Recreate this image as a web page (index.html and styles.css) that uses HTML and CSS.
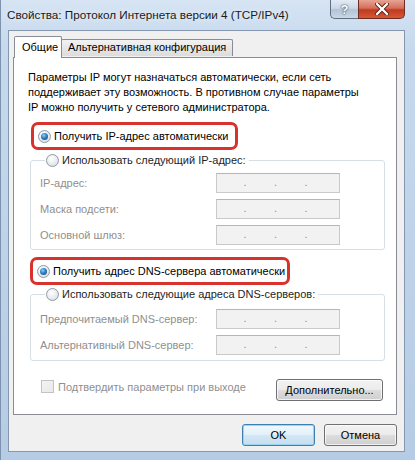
FILE: index.html
```html
<!DOCTYPE html>
<html lang="ru">
<head>
    <meta charset="UTF-8">
    <title>Свойства: Протокол Интернета версии 4 (TCP/IPv4)</title>
    <link rel="stylesheet" href="styles.css">
</head>
<body>
    <div class="window">
        <div class="titlebar">
            <span class="title">Свойства: Протокол Интернета версии 4 (TCP/IPv4)</span>
            <div class="caption-buttons">
                <span class="cap help">?</span>
                <span class="cap close">
                    <svg width="14" height="12" viewBox="0 0 14 12">
                        <path d="M2 1 L12 11 M12 1 L2 11" stroke="#5a1a12" stroke-width="4" stroke-linecap="round"/>
                        <path d="M2 1 L12 11 M12 1 L2 11" stroke="#ffffff" stroke-width="2.4" stroke-linecap="round"/>
                    </svg>
                </span>
            </div>
        </div>

        <div class="client">
            <div class="tabs">
                <span class="tab active">Общие</span>
                <span class="tab">Альтернативная конфигурация</span>
            </div>

            <div class="panel">
                <p class="intro">
                    Параметры IP могут назначаться автоматически, если сеть<br>
                    поддерживает эту возможность. В противном случае параметры<br>
                    IP можно получить у сетевого администратора.
                </p>

                <div class="highlight hl-ip">
                    <label class="option"><span class="radio checked"></span>Получить IP-адрес автоматически</label>
                </div>

                <fieldset class="group">
                    <legend><label class="option"><span class="radio"></span>Использовать следующий IP-адрес:</label></legend>
                    <div class="row"><span class="lbl">IP-адрес:</span><span class="ipbox"><i>.</i><i>.</i><i>.</i><i></i></span></div>
                    <div class="row"><span class="lbl">Маска подсети:</span><span class="ipbox"><i>.</i><i>.</i><i>.</i><i></i></span></div>
                    <div class="row"><span class="lbl">Основной шлюз:</span><span class="ipbox"><i>.</i><i>.</i><i>.</i><i></i></span></div>
                </fieldset>

                <div class="highlight hl-dns">
                    <label class="option"><span class="radio checked"></span>Получить адрес DNS-сервера автоматически</label>
                </div>

                <fieldset class="group group-dns">
                    <legend><label class="option"><span class="radio"></span>Использовать следующие адреса DNS-серверов:</label></legend>
                    <div class="row"><span class="lbl">Предпочитаемый DNS-сервер:</span><span class="ipbox"><i>.</i><i>.</i><i>.</i><i></i></span></div>
                    <div class="row"><span class="lbl">Альтернативный DNS-сервер:</span><span class="ipbox"><i>.</i><i>.</i><i>.</i><i></i></span></div>
                </fieldset>

                <div class="panel-foot">
                    <label class="check-option"><span class="checkbox"></span>Подтвердить параметры при выходе</label>
                    <button class="btn btn-more">Дополнительно...</button>
                </div>
            </div>

            <div class="dialog-buttons">
                <button class="btn btn-default">OK</button>
                <button class="btn">Отмена</button>
            </div>
        </div>
    </div>
</body>
</html>
```

FILE: styles.css
```css
* {
    margin: 0;
    padding: 0;
    box-sizing: border-box;
}

body {
    font-family: 'Liberation Sans', Arial, sans-serif;
    font-size: 11px;
    color: #000;
    background: #9fb6cf;
    white-space: nowrap;
}

.window {
    width: 415px;
    height: 460px;
    display: flex;
    flex-direction: column;
    background: linear-gradient(180deg, #d6e4f3 0%, #c6d9ee 10%, #bdd2e9 60%, #b6cce4 100%);
    border-left: 1px solid #7d93ad;
}

.titlebar {
    height: 30px;
    display: flex;
    justify-content: space-between;
    padding-left: 6px;
}

.title {
    font-size: 11.7px;
    line-height: 30px;
    color: #1a1a1a;
    text-shadow: 0 0 6px rgba(255,255,255,0.9);
}

.caption-buttons {
    display: flex;
    margin-right: 10px;
    height: 19px;
}

.cap {
    display: flex;
    align-items: center;
    justify-content: center;
    height: 19px;
    border: 1px solid #5f6e80;
    border-top: none;
}

.help {
    width: 28px;
    border-right: none;
    border-bottom-left-radius: 5px;
    background: linear-gradient(180deg, #e3ebf4 0%, #cbd8e6 45%, #b3c4d6 55%, #c8d8e8 100%);
    color: #fff;
    font-weight: bold;
    font-size: 13px;
    text-shadow: 0 0 2px #33475e, 0 0 1px #33475e;
}

.close {
    width: 47px;
    border-bottom-right-radius: 5px;
    border-color: #6d2b22;
    background: linear-gradient(180deg, #e8a493 0%, #d46f5a 45%, #c2391f 55%, #d25a34 100%);
}

.client {
    flex: 1;
    margin: 0 10px 8px 7px;
    background: #f0f0f0;
    border: 1px solid #8497ae;
    padding: 6px 7px 0 4px;
    display: flex;
    flex-direction: column;
}

/* tabs */

.tabs {
    display: flex;
    align-items: flex-end;
    height: 20px;
    padding-left: 1px;
    position: relative;
    z-index: 2;
}

.tab {
    height: 17px;
    line-height: 15px;
    padding: 0 6px;
    border: 1px solid #898c95;
    border-bottom: none;
    background: linear-gradient(180deg, #f2f2f2, #dcdcdc);
    border-radius: 2px 2px 0 0;
    margin-bottom: 1px;
    margin-left: -1px;
}

.tab.active {
    height: 22px;
    line-height: 21px;
    width: 48px;
    padding: 0 7px;
    background: #fff;
    margin-bottom: -1px;
    margin-left: 0;
    z-index: 3;
}

.panel {
    height: 358px;
    background: #fff;
    border: 1px solid #898c95;
    padding: 12px 13px 0 14px;
}

.intro {
    line-height: 15px;
}

/* red highlight frames */

.highlight {
    border: 3px solid #d8322c;
    border-radius: 7px;
    height: 28px;
    display: flex;
    align-items: center;
    padding-left: 4px;
    margin-top: 7px;
}

.hl-ip {
    width: 207px;
    margin-left: 3px;
}

.hl-dns {
    width: 260px;
    margin-left: 2px;
}

.option {
    display: flex;
    align-items: center;
    gap: 3px;
    line-height: 15px;
}

.radio {
    width: 13px;
    height: 13px;
    border-radius: 50%;
    border: 1px solid #8e9aa6;
    background: radial-gradient(circle at 40% 35%, #ffffff 0%, #e6e9ec 60%, #cdd3d9 100%);
    position: relative;
}

.radio.checked::after {
    content: "";
    position: absolute;
    left: 2px;
    top: 2px;
    width: 7px;
    height: 7px;
    border-radius: 50%;
    background: radial-gradient(circle at 40% 35%, #8fd0f5 0%, #2f7fc4 45%, #173f78 100%);
}

/* group boxes */

.group {
    border: 1px solid #d5dfe5;
    border-radius: 3px;
    width: 355px;
    margin: 3px 0 0 2px;
    padding: 5px 0 4px 9px;
}

.group legend {
    margin-left: 5px;
    padding: 0 3px 0 1px;
}

.group .option {
    color: #1e1e1e;
}

.row {
    display: flex;
    align-items: center;
    height: 20px;
    margin-bottom: 6px;
}

.row:last-child {
    margin-bottom: 0;
}

.lbl {
    width: 176px;
    color: #8f8f8f;
}

.ipbox {
    width: 124px;
    height: 20px;
    border: 1px solid #c9c9c9;
    border-top-color: #b5b5b5;
    background: #f2f2f2;
    display: grid;
    grid-template-columns: repeat(4, 1fr);
}

.ipbox i {
    font-style: normal;
    text-align: right;
    color: #8f8f8f;
    line-height: 17px;
    padding-right: 1px;
}

.hl-dns {
    margin-top: 7px;
}

.group-dns {
    margin-top: 2px;
    padding: 7px 0 5px 9px;
}

/* footer of the tab page */

.panel-foot {
    display: flex;
    justify-content: space-between;
    align-items: flex-start;
    margin-top: 18px;
}

.check-option {
    display: flex;
    align-items: center;
    gap: 4px;
    color: #8f8f8f;
    margin-left: 13px;
    height: 13px;
    margin-top: 1px;
}

.checkbox {
    width: 13px;
    height: 13px;
    border: 1px solid #c3c3c3;
    background: linear-gradient(135deg, #f3f3f3, #e8e8e8);
}

.btn {
    font-family: 'Liberation Sans', Arial, sans-serif;
    font-size: 11px;
    color: #000;
    height: 22px;
    border: 1px solid #707070;
    border-radius: 3px;
    background: linear-gradient(180deg, #f2f2f2 0%, #ebebeb 50%, #dddddd 51%, #cfcfcf 100%);
    box-shadow: inset 0 0 0 1px rgba(255,255,255,0.7);
}

.btn-more {
    width: 107px;
    margin-right: 0;
}

.dialog-buttons {
    display: flex;
    justify-content: flex-end;
    gap: 9px;
    margin-top: 9px;
}

.dialog-buttons .btn {
    width: 73px;
}

.btn-default {
    border-color: #3c7fb1;
    background: linear-gradient(180deg, #f1f8fd 0%, #e3f0f9 50%, #d3e7f5 51%, #c6def0 100%);
    box-shadow: inset 0 0 0 1px #9cd4f2;
}
```
